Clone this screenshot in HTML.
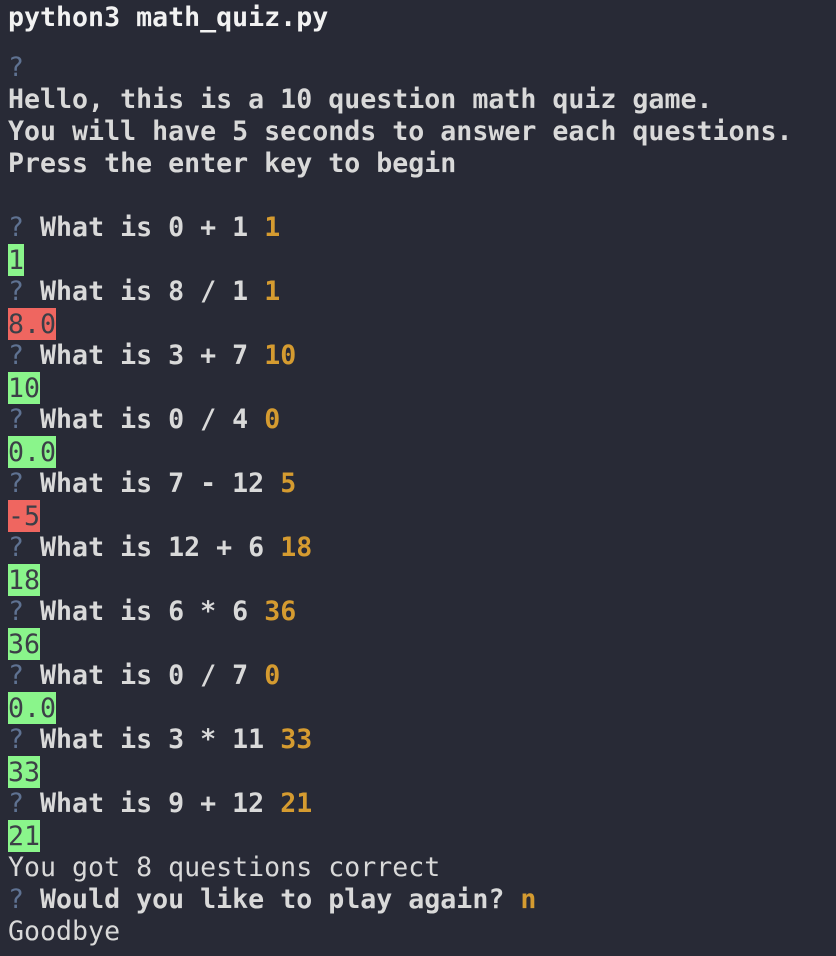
<!DOCTYPE html>
<html><head><meta charset="utf-8"><style>
html,body{margin:0;padding:0;background:#282a36;width:836px;height:956px;overflow:hidden}
body{font-family:"DejaVu Sans Mono","Liberation Mono",monospace;font-size:26.6px;color:#d9d9d9;position:relative}
.h{position:absolute;left:8px;top:2px;line-height:32px;font-weight:bold;color:#f2f2f2;white-space:pre}
.t{position:absolute;left:8px;top:52px}
.t div{height:32px;line-height:32px;white-space:pre}
b{font-weight:bold}
.q{color:#5f7292;font-weight:normal}
.o{color:#d59b30;font-weight:bold}
.g,.r{display:inline-block;height:32px;line-height:34px;vertical-align:top}
.g{background:#8af58b;color:#3c3f47}
.r{background:#ef6660;color:#3c3f47}
</style></head><body>
<div class="h">python3 math_quiz.py</div>
<div class="t"><div><span class="q">?</span></div><div><b>Hello, this is a 10 question math quiz game.</b></div><div><b>You will have 5 seconds to answer each questions.</b></div><div><b>Press the enter key to begin</b></div><div> </div><div><span class="q">?</span> <b>What is 0 + 1</b> <span class="o">1</span></div><div><span class="g">1</span></div><div><span class="q">?</span> <b>What is 8 / 1</b> <span class="o">1</span></div><div><span class="r">8.0</span></div><div><span class="q">?</span> <b>What is 3 + 7</b> <span class="o">10</span></div><div><span class="g">10</span></div><div><span class="q">?</span> <b>What is 0 / 4</b> <span class="o">0</span></div><div><span class="g">0.0</span></div><div><span class="q">?</span> <b>What is 7 - 12</b> <span class="o">5</span></div><div><span class="r">-5</span></div><div><span class="q">?</span> <b>What is 12 + 6</b> <span class="o">18</span></div><div><span class="g">18</span></div><div><span class="q">?</span> <b>What is 6 * 6</b> <span class="o">36</span></div><div><span class="g">36</span></div><div><span class="q">?</span> <b>What is 0 / 7</b> <span class="o">0</span></div><div><span class="g">0.0</span></div><div><span class="q">?</span> <b>What is 3 * 11</b> <span class="o">33</span></div><div><span class="g">33</span></div><div><span class="q">?</span> <b>What is 9 + 12</b> <span class="o">21</span></div><div><span class="g">21</span></div><div>You got 8 questions correct</div><div><span class="q">?</span> <b>Would you like to play again?</b> <span class="o">n</span></div><div>Goodbye</div></div>
</body></html>
